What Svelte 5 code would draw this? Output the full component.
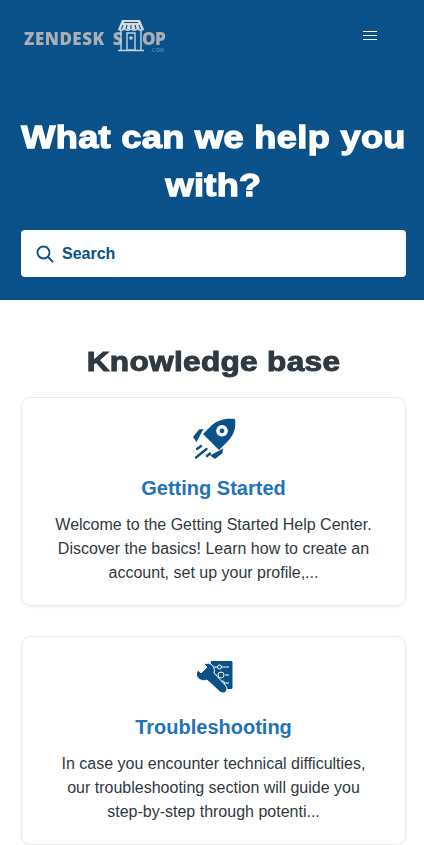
<script>
    const cards = [
        {
            title: 'Getting Started',
            text: 'Welcome to the Getting Started Help Center. Discover the basics! Learn how to create an account, set up your profile,...',
            icon: 'rocket'
        },
        {
            title: 'Troubleshooting',
            text: 'In case you encounter technical difficulties, our troubleshooting section will guide you step-by-step through potenti...',
            icon: 'tools'
        }
    ];
</script>

<div class="page">
    <header class="hero">
        <div class="topbar">
            <div class="logo">
                <span class="logo-text">ZENDESK</span>
                <span class="logo-text s">S</span>
                <svg class="shop" width="28" height="33" viewBox="0 0 28 33">
                    <path d="M5 1h18l4 9.500H1z" fill="#d5dde4"/>
                    <path d="M7 3.500h14M6 6l-1.500 4M10 6l-1 4M14 6v4M18 6l1 4M22 6l1.500 4" stroke="#0a5189" stroke-width="1.100" fill="none"/>
                    <path d="M1 10.500q3 2 6.500 0q3 2 6.500 0q3 2 6.500 0q3 2 6.500 0" fill="#d5dde4" stroke="#d5dde4"/>
                    <path d="M4 12v19M24 12v19M10 14h8v17h-8zM1 31.500h26" stroke="#c4d3e0" stroke-width="1.400" fill="none"/>
                    <circle cx="14" cy="19" r="1.800" fill="#c4d3e0"/>
                </svg>
                <span class="logo-text op">OP</span>
                <span class="com">.COM</span>
            </div>
            <button class="menu" aria-label="Menu">
                <span></span><span></span><span></span>
            </button>
        </div>
        <h1>What can we help you with?</h1>
        <div class="search">
            <svg width="18" height="18" viewBox="0 0 18 18" fill="none" stroke="#0a5189" stroke-width="1.800">
                <circle cx="7.500" cy="7.500" r="6"/>
                <path d="M12 12l5 5"/>
            </svg>
            <span>Search</span>
        </div>
    </header>

    <main>
        <h2>Knowledge base</h2>
        <div class="cards">
            {#each cards as card}
                <div class="card">
                    <div class="icon">
                        {#if card.icon === 'rocket'}
                            <svg width="44" height="42" viewBox="0 0 44 42" fill="#0a5189">
                                <path fill-rule="evenodd" d="M11 16l9-9C27 1 36 0 43 1c1 7 0 15-7 22l-9 9zM30 7a5.800 5.800 0 1 0 .01 0zM30 10.500a2.400 2.400 0 1 1-.01 0z"/>
                                <path d="M1 19l6-7.500 4.500-.5L4.500 24zM23 41l7.500-6 .5-4.500L18 37.500z"/>
                                <path stroke="#0a5189" stroke-width="2.400" stroke-linecap="round" d="M5 31l4-3M4 39.500L14.500 31M15 38l3-2.500"/>
                            </svg>
                        {:else}
                            <svg width="38" height="36" viewBox="0 0 38 36">
                                <path fill="#0a5189" d="M16 1h20a1.500 1.500 0 0 1 1.500 1.500v25a1.500 1.500 0 0 1-1.500 1.500H26L14 16z"/>
                                <path stroke="#fff" stroke-width="1" fill="none" d="M19 7h3M27 7h7M21 15h1M30 15h4M24 23h1M30 23h4"/>
                                <circle cx="24.500" cy="7" r="2" stroke="#fff" fill="none"/>
                                <circle cx="26" cy="15" r="3" stroke="#fff" fill="none"/>
                                <circle cx="27.500" cy="23" r="2" stroke="#fff" fill="none"/>
                                <path fill="#0a5189" stroke="#fff" stroke-width="1" d="M9 4l3 3-6 6-3-3c-2 3-2 6 0 8 3 3 6 3 9 2l13 12c4 3 9-1 6-6L19 13c1-3 0-6-2-8-2-2-5-2-8-1z"/>
                            </svg>
                        {/if}
                    </div>
                    <h3>{card.title}</h3>
                    <p>{card.text}</p>
                </div>
            {/each}
        </div>
    </main>
</div>

<style>
    :global(body) {
        margin: 0;
        background: #fff;
        font-family: "Liberation Sans", Arial, sans-serif;
    }

    .page {
        height: 845px;
        overflow: hidden;
    }

    .hero {
        background: #0a5189;
        height: 300px;
        padding: 0 18px 0 21px;
        box-sizing: border-box;
    }

    .topbar {
        display: flex;
        justify-content: space-between;
        align-items: flex-start;
        height: 113px;
    }

    .logo {
        display: flex;
        align-items: flex-start;
        margin: 19px 0 0 3px;
        color: #a9afb5;
        position: relative;
        filter: blur(0.3px);
    }

    .logo-text {
        font-family: "Open Sans", sans-serif;
        font-weight: 800;
        font-size: 17px;
        line-height: 14px;
        letter-spacing: 0.5px;
        margin-top: 13px;
    }

    .s {
        margin-left: 8px;
    }

    .shop {
        margin-left: -6px;
    }

    .op {
        margin-left: -3px;
        letter-spacing: -0.5px;
    }

    .com {
        position: absolute;
        left: 127px;
        top: 29px;
        font-size: 5px;
        line-height: 5px;
        color: #7f9fbd;
        font-family: "Open Sans", sans-serif;
    }

    .menu {
        display: flex;
        flex-direction: column;
        gap: 3px;
        background: none;
        border: 0;
        padding: 0;
        margin: 31px 29px 0 0;
    }

    .menu span {
        display: block;
        width: 14px;
        height: 1px;
        background: #fff;
    }

    h1 {
        margin: 0;
        padding: 0 22px;
        text-align: center;
        color: #fff;
        font-weight: 700;
        font-size: 32px;
        line-height: 48px;
        letter-spacing: 0.3px;
        -webkit-text-stroke: 1.300px #fff;
        transform: scaleX(1.13);
    }

    .search {
        display: flex;
        align-items: center;
        gap: 8px;
        height: 47px;
        margin-top: 21px;
        padding-left: 15px;
        background: #fff;
        border-radius: 4px;
        color: #0a5189;
        font-weight: 700;
        font-size: 16px;
    }

    main {
        padding: 43px 18px 0 21px;
    }

    h2 {
        margin: 0 0 16px;
        text-align: center;
        color: #2f3941;
        font-weight: 700;
        font-size: 28px;
        line-height: 38px;
        letter-spacing: 0.25px;
        -webkit-text-stroke: 1px #2f3941;
        transform: scaleX(1.13);
    }

    .cards {
        display: flex;
        flex-direction: column;
        gap: 30px;
    }

    .card {
        height: 209px;
        box-sizing: border-box;
        padding: 20px 28px 0;
        border: 1px solid #e8eaee;
        border-radius: 10px;
        background: #fff;
        box-shadow: 0 1px 4px rgba(0, 0, 0, 0.06);
        text-align: center;
    }

    .icon {
        display: flex;
        justify-content: center;
        align-items: center;
        height: 42px;
    }

    h3 {
        margin: 16px 0 13px;
        color: #1f73b7;
        font-weight: 700;
        font-size: 20px;
        line-height: 24px;
    }

    p {
        margin: 0;
        color: #2f3941;
        font-size: 16px;
        line-height: 24px;
    }
</style>
